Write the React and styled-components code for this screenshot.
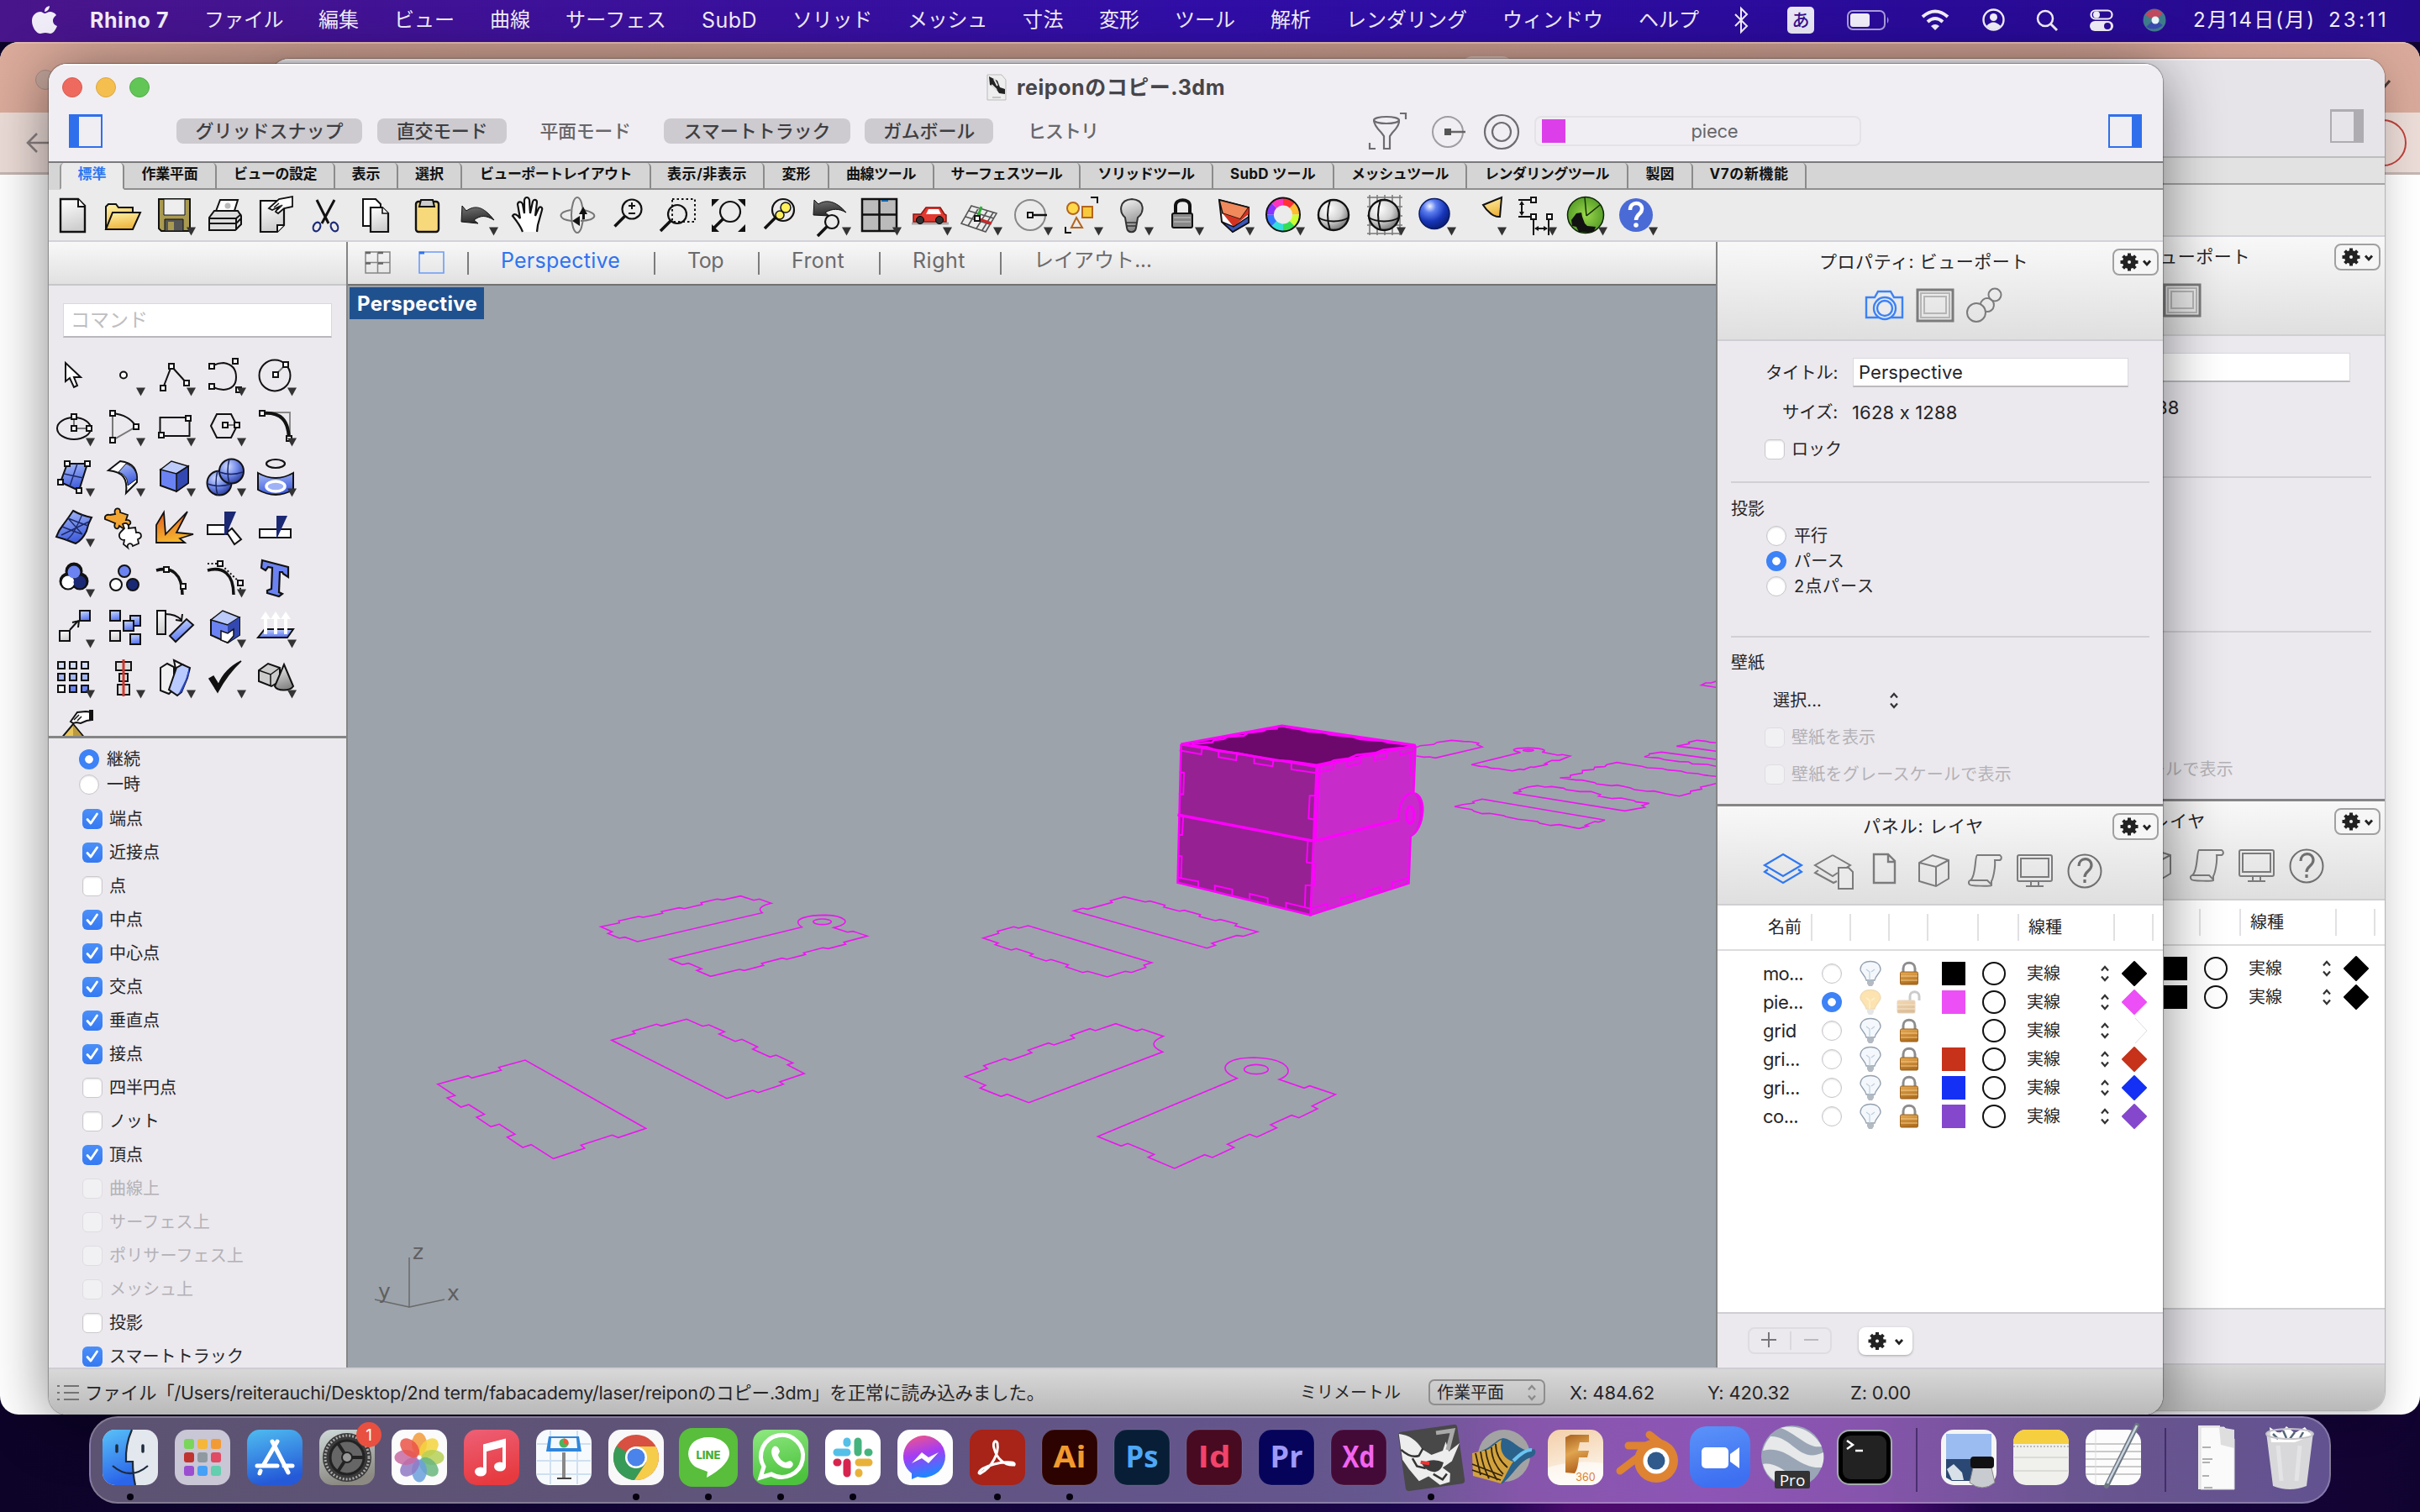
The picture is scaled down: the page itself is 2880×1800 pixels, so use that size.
import React, { useLayoutEffect, useRef, useState } from "react";
import styled, { createGlobalStyle, css } from "styled-components";

const Global = createGlobalStyle`
  * { box-sizing: border-box; }
  html, body { margin: 0; padding: 0; }
  body {
    width: 2880px; height: 1800px; overflow: hidden;
    font-family: Inter, "Noto Sans CJK JP", sans-serif;
    color: #262528; font-size: 20px;
    -webkit-font-smoothing: antialiased;
  }
`;

/* ---------- text ---------- */

const TextBox = styled.span`
  display: block;
  flex: none;
  white-space: nowrap;
  line-height: ${(p) => p.$lh || 30}px;
  font-size: ${(p) => p.$size || 20}px;
  font-weight: ${(p) => p.$weight || 400};
  color: ${(p) => p.$color || "inherit"};
`;
const TextRun = styled.span`
  display: inline-block;
`;

function Text({ w, size, weight, color, lh, children }) {
  const ref = useRef(null);
  const [spacing, setSpacing] = useState(0);
  useLayoutEffect(() => {
    if (w && ref.current) {
      const natural = ref.current.getBoundingClientRect().width;
      setSpacing((w - natural) / children.length);
    }
  }, []);
  return (
    <TextBox $size={size} $weight={weight} $color={color} $lh={lh} style={w ? { width: w } : undefined}>
      <TextRun ref={ref} style={{ letterSpacing: spacing }}>{children}</TextRun>
    </TextBox>
  );
}

/* ---------- desktop ---------- */

const Desktop = styled.main`
  position: relative;
  width: 2880px;
  height: 1800px;
  overflow: hidden;
  background: linear-gradient(90deg, #0d0328 0%, #160540 50%, #1d0650 62%, #4c0b6c 65%, #480a70 78%, #1a0445 82%, #110330 100%);
`;

const MenuBar = styled.header`
  height: 50px;
  display: flex;
  align-items: center;
  padding: 0 37px 3px 37px;
  background: linear-gradient(90deg, #49158a 0%, #3c119a 25%, #300ea6 50%, #290b98 80%, #260a8c 100%);
  color: #f1edf8;
`;
const MenuItems = styled.nav`
  display: flex;
  gap: 42px;
  margin-left: 38px;
`;
const StatusItems = styled.div`
  display: flex;
  align-items: center;
  margin-left: auto;
`;
const StatusSlot = styled.div`
  width: ${(p) => p.$w}px;
  display: flex;
  justify-content: center;
  flex: none;
`;
const InputBadge = styled.div`
  width: 32px;
  height: 32px;
  border-radius: 5px;
  background: #e9e6f6;
  display: flex;
  align-items: center;
  justify-content: center;
`;

const Window = styled.section`
  position: absolute;
  left: ${(p) => p.$x}px;
  top: ${(p) => p.$y}px;
  width: ${(p) => p.$w}px;
  height: ${(p) => p.$h}px;
  border-radius: 22px;
  overflow: hidden;
  display: flex;
  flex-direction: column;
  background: ${(p) => p.$bg || "#ebe9ee"};
  box-shadow: ${(p) => p.$shadow || "none"};
`;

/* ---------- browser window ---------- */

const BrowserTabs = styled.div`
  height: 84px;
  flex: none;
  display: flex;
  align-items: flex-start;
  justify-content: space-between;
  padding: 31px 35px 0 42px;
  border-top: 2px solid #e3bcae;
  background: linear-gradient(90deg, #dbab9b 0%, #c99d8f 10%, #c69a8b 50%, #c99c8f 85%, #d9aa9b 100%);
`;
const BrowserTab = styled.div`
  width: 60px;
  height: 40px;
  margin: -16px auto 0 1674px;
  border-radius: 12px;
  background: #d9bdb4;
`;
const BrowserBar = styled.div`
  height: 74px;
  flex: none;
  display: flex;
  align-items: center;
  justify-content: space-between;
  padding: 0 14px 0 30px;
  background: #ecdcd7;
  border-bottom: 3px solid #c5b6b2;
`;

/* ---------- rhino window chrome ---------- */

const TitleArea = styled.div`
  height: 116px;
  flex: none;
  background: ${(p) => (p.$dim ? "#e6e4e9" : "#f0eef3")};
  border-top: 2px solid ${(p) => (p.$dim ? "#f4f2f5" : "#fbfafc")};
`;
const TitleRow = styled.div`
  height: 52px;
  display: grid;
  grid-template-columns: 1fr auto 1fr;
  align-items: center;
  padding: 0 16px 0 16px;
`;
const Lights = styled.div`
  display: flex;
  gap: 16px;
`;
const Light = styled.i`
  width: 24px;
  height: 24px;
  border-radius: 50%;
  background: ${(p) => p.$c};
  border: 1px solid ${(p) => p.$b};
`;
const TitleText = styled.div`
  display: flex;
  align-items: center;
  gap: 12px;
`;
const ModeRow = styled.div`
  height: 52px;
  display: flex;
  align-items: center;
  padding: 0 25px 0 24px;
`;
const Modes = styled.div`
  display: flex;
  align-items: center;
  margin-left: 88px;
`;
const Mode = styled.div`
  width: ${(p) => p.$w}px;
  height: 30px;
  margin-right: ${(p) => p.$gap || 0}px;
  border-radius: 8px;
  display: flex;
  align-items: center;
  justify-content: center;
  padding-bottom: 1px;
  background: ${(p) => (p.$on ? "#cdcbd0" : "transparent")};
  color: ${(p) => (p.$on ? "#3f3e42" : "#68676b")};
`;
const RightTools = styled.div`
  margin-left: auto;
  display: flex;
  align-items: center;
`;
const LayerField = styled.div`
  width: 389px;
  height: 36px;
  margin: 0 294px 0 17px;
  padding-left: 2px;
  border: 2px solid #e4e2e7;
  border-radius: 8px;
  display: grid;
  grid-template-columns: 38px 1fr;
  align-items: center;
  justify-items: center;
`;
const Swatch = styled.i`
  display: block;
  width: 28px;
  height: 28px;
  background: ${(p) => p.$c};
`;
const PanelToggle = styled.i`
  display: block;
  width: 40px;
  height: 40px;
  border: 2px solid ${(p) => p.$c};
  border-${(p) => p.$side}-width: 12px;
  border-top-width: 3px;
`;

const TabStrip = styled.div`
  height: 34px;
  flex: none;
  display: flex;
  align-items: stretch;
  padding-left: 13px;
  background: ${(p) => (p.$dim ? "#e2e2e2" : "#d5d5d5")};
  border-top: 2px solid ${(p) => (p.$dim ? "#bdbcc0" : "#7b7b7d")};
  border-bottom: ${(p) => (p.$dim ? 2 : 0)}px solid #a3a3a3;
`;
const ToolTab = styled.div`
  width: ${(p) => p.$w}px;
  display: flex;
  justify-content: center;
  align-items: center;
  padding-bottom: 4px;
  border-right: 2px solid #8b8b8b;
  border-top-right-radius: 5px;
  border-bottom: 2px solid #8f8f8f;
  color: #111;
  ${(p) =>
    p.$active &&
    css`
      background: #ebebeb;
      border-bottom-color: #ebebeb;
      border-left: 2px solid #999;
      border-top-left-radius: 5px;
      color: #2f78f0;
    `}
`;
const TabFill = styled.div`
  flex: 1;
  border-bottom: 2px solid #8f8f8f;
`;
const ToolBar = styled.div`
  height: 62px;
  flex: none;
  display: flex;
  background: ${(p) => (p.$dim ? "#e9e9e9" : "#ebebeb")};
  border-bottom: 2px solid #d3d2d9;
`;
const ToolRun = styled.div`
  display: flex;
  margin-left: -1px;
`;
const Glyph = styled.svg`
  display: block;
  flex: none;
  width: ${(p) => p.$w || 60}px;
  height: ${(p) => p.$h || p.$w || 60}px;
  overflow: visible;
`;

const Body = styled.div`
  flex: 1;
  min-height: 0;
  display: flex;
`;
const LeftPanel = styled.aside`
  width: 356px;
  flex: none;
  display: flex;
  flex-direction: column;
  overflow: hidden;
  border-right: 2px solid #858585;
  background: #ebe9ee;
`;
const LeftHead = styled.div`
  height: 52px;
  flex: none;
  background: linear-gradient(#f8f8f8, #e1e1e1);
  border-bottom: 2px solid #c7c6c9;
`;
const CommandInput = styled.div`
  margin: 21px 17px 15px 17px;
  height: 41px;
  flex: none;
  display: flex;
  align-items: center;
  padding-left: 8px;
  background: #fff;
  border: 1px solid #dad8dd;
  border-bottom: 2px solid #b9b7bc;
`;
const ToolGrid = styled.div`
  height: 459px;
  flex: none;
  display: grid;
  grid-template-columns: repeat(5, 60px);
  grid-auto-rows: 60px;
  align-content: start;
  margin-left: -1px;
  overflow: hidden;
`;
const SnapList = styled.div`
  flex: 1;
  min-height: 0;
  overflow: hidden;
  border-top: 3px solid #858585;
  padding: 10px 0 0 36px;
`;
const SnapRadio = styled.div`
  height: 30px;
  display: flex;
  align-items: center;
  gap: 9px;
`;
const SnapRow = styled.div`
  height: 40px;
  display: flex;
  align-items: center;
  gap: 8px;
  padding-left: 4px;
  color: ${(p) => (p.$off ? "#b3b1b6" : "inherit")};
`;
const SnapGap = styled.div`
  height: 6px;
`;
const Radio = styled.i`
  flex: none;
  width: 24px;
  height: 24px;
  border-radius: 50%;
  background: ${(p) => (p.$on ? "radial-gradient(circle, #fff 0 4.4px, #3d82f6 5.2px)" : "#fff")};
  border: ${(p) => (p.$on ? 0 : 1)}px solid #c6c4c9;
  box-shadow: ${(p) => (p.$on ? "none" : "inset 0 1px 2px rgba(0,0,0,.14)")};
`;
const Box = styled.i`
  flex: none;
  width: 24px;
  height: 24px;
  border-radius: 6px;
  background: ${(p) => (p.$on ? "linear-gradient(#4a8ff8, #3579f2)" : p.$off ? "#f1f0f3" : "#fff")};
  border: ${(p) => (p.$on ? 0 : 1)}px solid ${(p) => (p.$off ? "#dfdde2" : "#cbc9ce")};
  box-shadow: ${(p) => (p.$on || p.$off ? "none" : "inset 0 1px 2px rgba(0,0,0,.12)")};
`;

const Viewport = styled.section`
  width: 1628px;
  flex: none;
  display: flex;
  flex-direction: column;
`;
const ViewTabs = styled.div`
  height: 52px;
  flex: none;
  display: flex;
  align-items: center;
  padding: 0 0 6px 20px;
  background: linear-gradient(#f8f8f8, #e1e1e1);
  border-bottom: 2px solid #727272;
`;
const ViewTab = styled.div`
  width: ${(p) => p.$w}px;
  height: 27px;
  margin-top: 6px;
  border-left: 2px solid #7c7c7c;
  display: flex;
  align-items: center;
  padding: 0 0 6px ${(p) => p.$pad}px;
  color: ${(p) => (p.$active ? "#2f73f0" : "#6b6a6d")};
`;
const ViewIcons = styled.div`
  width: 122px;
  display: flex;
  gap: 33px;
  margin-top: 4px;
`;
const Scene = styled.div`
  flex: 1;
  position: relative;
  background: #9ca3ab;
`;
const SceneSvg = styled.svg`
  display: block;
  width: 1628px;
  height: 1288px;
`;
const ViewLabel = styled.div`
  position: absolute;
  left: 2px;
  top: 2px;
  width: 160px;
  height: 38px;
  padding: 1px 0 0 9px;
  display: flex;
  align-items: center;
  background: #20518f;
  color: #fff;
`;

/* ---------- right panel ---------- */

const RightPanel = styled.aside`
  width: 532px;
  flex: none;
  margin-left: auto;
  border-left: 2px solid #858585;
  display: flex;
  flex-direction: column;
  background: #ebe9ee;
`;
const PanelHead = styled.div`
  height: ${(p) => p.$h}px;
  flex: none;
  display: grid;
  grid-template-columns: 1fr 60px;
  grid-template-rows: 47px 1fr;
  background: linear-gradient(#f8f8f8, #dfdfdf);
  border-bottom: 2px solid #cfced3;
`;
const PanelTitle = styled.div`
  grid-column: 1 / 3;
  grid-row: 1;
  display: flex;
  padding: ${(p) => p.$top}px 0 0 ${(p) => p.$left}px;
`;
const PanelGear = styled.div`
  grid-column: 2;
  grid-row: 1;
  margin: 8px 5px 0 0;
  width: 55px;
  height: 32px;
  border: 2px solid #a0a0a1;
  border-radius: 8px;
  background: #f6f6f6;
`;
const PanelIcons = styled.div`
  grid-column: 1 / 3;
  grid-row: 2;
  display: flex;
  align-items: flex-start;
  gap: ${(p) => p.$gap}px;
  padding: ${(p) => p.$top}px 0 0 ${(p) => p.$left}px;
`;
const Props = styled.div`
  height: 554px;
  flex: none;
  display: flex;
  flex-direction: column;
  border-bottom: 3px solid #858585;
  padding: 0 16px;
`;
const FieldRow = styled.div`
  display: flex;
  align-items: center;
  flex: none;
  height: ${(p) => p.$h}px;
  margin-top: ${(p) => p.$mt || 0}px;
  padding-left: ${(p) => p.$pl || 0}px;
  gap: ${(p) => p.$gap || 0}px;
  color: ${(p) => (p.$off ? "#b3b1b6" : "inherit")};
`;
const FieldInput = styled.div`
  width: 328px;
  height: 35px;
  background: #fff;
  border: 1px solid #dad8dd;
  border-bottom: 2px solid #bcbabf;
  padding-left: 6px;
  display: flex;
  align-items: center;
`;
const Rule = styled.div`
  height: 2px;
  flex: none;
  background: #d1cfd4;
  margin-top: ${(p) => p.$mt}px;
`;

const Table = styled.div`
  flex: 1;
  background: #fff;
  display: flex;
  flex-direction: column;
`;
const cols = css`
  display: grid;
  grid-template-columns: 113px 46px 46px 46px 60px 48px 114px 46px 1fr;
  align-items: center;
`;
const HeadRow = styled.div`
  ${cols};
  height: 54px;
  flex: none;
  border-bottom: 2px solid #dcdbde;
  margin-bottom: 10px;
`;
const HeadCell = styled.div`
  height: 32px;
  display: flex;
  align-items: center;
  padding-left: ${(p) => p.$pl || 0}px;
  border-right: ${(p) => (p.$end ? 0 : 2)}px solid #e1e0e3;
`;
const LayerRow = styled.div`
  ${cols};
  height: 34px;
`;
const Cell = styled.div`
  display: flex;
  align-items: center;
  justify-content: ${(p) => p.$j || "center"};
  padding-left: ${(p) => p.$pl || 0}px;
  gap: ${(p) => p.$gap || 0}px;
`;
const Ring = styled.i`
  width: 28px;
  height: 28px;
  border: 2px solid #111;
  border-radius: 50%;
`;
const PanelFoot = styled.div`
  height: 66px;
  flex: none;
  border-top: 2px solid #cfced2;
  display: flex;
  align-items: center;
  gap: 32px;
  padding: 0 0 0 36px;
`;
const Segmented = styled.div`
  width: 100px;
  height: 32px;
  border: 2px solid #dedce1;
  border-radius: 8px;
`;
const GearMenu = styled.div`
  width: 64px;
  height: 33px;
  background: #fff;
  border-radius: 8px;
  box-shadow: 0 1px 3px rgba(0, 0, 0, 0.3);
`;

const StatusBar = styled.footer`
  height: 56px;
  flex: none;
  display: flex;
  align-items: center;
  padding: 1px 0 0 10px;
  background: linear-gradient(#d8d8d8, #b9b9b9);
  border-top: 2px solid #cfcdd3;
`;
const StatusCell = styled.div`
  width: ${(p) => p.$w}px;
  flex: none;
`;
const Popup = styled.div`
  width: 139px;
  height: 31px;
  margin-right: 29px;
  border: 2px solid #8e8e8e;
  border-radius: 7px;
  display: flex;
  align-items: center;
  justify-content: space-between;
  padding: 0 8px;
`;

/* ---------- dock ---------- */

const Dock = styled.footer`
  position: absolute;
  left: 106px;
  top: 1686px;
  width: 2668px;
  height: 104px;
  border-radius: 34px;
  border: 2px solid rgba(255, 255, 255, 0.24);
  background: linear-gradient(90deg, #5c5271 0%, #5f5478 25%, #63558a 48%, #65578f 58%, #8656ab 64%, #8d55b6 72%, #8754ad 79%, #69558f 89%, #625290 100%);
  display: flex;
  padding: 9px 0 0 4px;
`;
const DockSlot = styled.div`
  width: 86px;
  flex: none;
  display: flex;
  flex-direction: column;
  align-items: center;
`;
const DockDot = styled.i`
  flex: none;
  width: 8px;
  height: 8px;
  margin-top: 5px;
  border-radius: 50%;
  background: #06020f;
`;
const DockSep = styled.div`
  width: 38px;
  flex: none;
  display: flex;
  justify-content: center;
  &::before {
    content: "";
    width: 2px;
    height: 76px;
    margin-top: 3px;
    background: rgba(50, 30, 90, 0.7);
  }
`;

/* ---------- shared gradients ---------- */

const Stops = ({ s }) => s.map(([o, c]) => <stop key={o} offset={o} stopColor={c} />);
const grads = {
  gBlue: [[0, "#cfdcff"], [1, "#5b78f0"]],
  gBlueD: [[0, "#a9bcf8"], [1, "#3e5cdc"]],
  gPage: [[0, "#ffffff"], [1, "#cfcfcf"]],
  gYel: [[0, "#fff2a8"], [1, "#eeb640"]],
  gDark: [[0, "#777777"], [1, "#2b2b2b"]],
  gGray: [[0, "#f5f5f5"], [1, "#888888"]],
  gFire: [[0, "#e05a20"], [1, "#f5b52f"]],
  gFinder: [[0, "#59c2f8"], [1, "#2b66ea"]],
  gStore: [[0, "#4fbcf0"], [1, "#2459d8"]],
  gMusic: [[0, "#ee6076"], [1, "#e63a3f"]],
  gWa: [[0, "#8fe981"], [1, "#4cc23d"]],
  gMes: [[0, "#f5577f"], [0.5, "#a43cf5"], [1, "#1f86ff"]],
  gZoom: [[0, "#5b93f9"], [1, "#3d6ff1"]],
  gFus: [[0, "#f3cfa9"], [1, "#fdf6ec"]],
  gFusF: [[0, "#a85f1e"], [0.5, "#e0a550"], [1, "#b4651f"]],
  gLock: [[0, "#e8ab55"], [1, "#b06f1e"]],
  gSet: [[0, "#cfdad9"], [1, "#8c8a83"]],
};
const Defs = () => (
  <Glyph $w={0.01} viewBox="0 0 1 1">
    <defs>
      {Object.entries(grads).map(([id, s]) => (
        <linearGradient key={id} id={id} x1="0" y1="0" x2="0.25" y2="1"><Stops s={s} /></linearGradient>
      ))}
      <radialGradient id="rBlue" cx=".35" cy=".3" r=".8"><Stops s={[[0, "#d0dcff"], [0.5, "#7088e8"], [1, "#1d2f90"]]} /></radialGradient>
      <radialGradient id="rNavy" cx=".35" cy=".25" r=".85"><Stops s={[[0, "#f0f5ff"], [0.25, "#5c7df0"], [0.6, "#1635b8"], [1, "#081660"]]} /></radialGradient>
      <radialGradient id="rGray" cx=".35" cy=".3" r=".85"><Stops s={[[0, "#ffffff"], [0.5, "#d2d2d2"], [1, "#555555"]]} /></radialGradient>
      <radialGradient id="rGreen" cx=".5" cy=".5" r=".6"><Stops s={[[0, "#9ad84a"], [1, "#4c9423"]]} /></radialGradient>
    </defs>
  </Glyph>
);

/* ---------- tool glyphs, 60 x 60 cells ---------- */

const K = "#111";
const Sq = ({ x, y }) => <rect x={x - 3} y={y - 3} width="6" height="6" fill="#fff" stroke="#111" strokeWidth="2" />;
const Line = (p) => <path fill="none" stroke={K} strokeWidth="2" {...p} />;
const Arrow = () => <path d="M45 44.500h11l-5.500 10z" fill="#333" />;
const Lens = ({ x = 34, y = 24, r = 11, f = "none" }) => (
  <g>
    <circle cx={x} cy={y} r={r} fill={f} stroke={K} strokeWidth="2.200" />
    <path d={`M${x - r * 0.7} ${y + r * 0.7}L${x - r - 9} ${y + r + 9}`} stroke={K} strokeWidth="3.500" />
  </g>
);

const top = [
  [<g><path d="M15 11h21l8 8v31H15z" fill="url(#gPage)" stroke={K} strokeWidth="2.400" /><path d="M36 11v9h8" fill="#fff" stroke={K} strokeWidth="2" /></g>],
  [<g><path d="M9 47V20l3-3h9l3 4h17v8" fill="url(#gYel)" stroke={K} strokeWidth="2" /><path d="M9 47l8-20h33l-9 20z" fill="url(#gYel)" stroke={K} strokeWidth="2" /></g>],
  [<g><path d="M12 11h37v38H15l-3-3z" fill="#a99a50" stroke={K} strokeWidth="2" /><path d="M18 11h25v19H18z" fill="#eee" stroke={K} /><path d="M19 35h22v14H19z" fill="#555" stroke={K} /><path d="M23 38h7v10h-7z" fill="#a99a50" /></g>, 1],
  [<g><path d="M19 28l6-16h21l-5 16z" fill="#fff" stroke={K} strokeWidth="2" /><path d="M12 33l6-8h28l4 6v10l-7 7H12z" fill="#ddd" stroke={K} strokeWidth="2" /><path d="M12 34h32l6-5M12 40h32l6-6M44 34v14" fill="none" stroke={K} strokeWidth="2" /><circle cx="34" cy="19" r="3.500" fill="#bbb" /></g>],
  [<g><path d="M13 13h28v29l-8 8H13z" fill="url(#gPage)" stroke={K} strokeWidth="2.200" /><path d="M33 50v-8h8" fill="#fff" stroke={K} strokeWidth="2" /><path d="M23 22l12-11 16-3v12l-10 2-7 6-3-2 4-6-8 4z" fill="#fff" stroke={K} strokeWidth="1.800" /><path d="M29 21l6-5M33 24l6-6" stroke={K} strokeWidth="1.500" /></g>],
  [<g><path d="M20 12l14 28M41 12L26 40" stroke={K} strokeWidth="3" /><ellipse cx="20" cy="44" rx="4" ry="5.500" fill="none" stroke="#1c2a78" strokeWidth="2.200" transform="rotate(25 20 44)" /><ellipse cx="41" cy="44" rx="4" ry="5.500" fill="none" stroke="#1c2a78" strokeWidth="2.200" transform="rotate(-25 41 44)" /></g>],
  [<g><path d="M15 11h15l6 6v26H15z" fill="#fff" stroke={K} strokeWidth="2" /><path d="M24 21h14l7 7v22H24z" fill="url(#gPage)" stroke={K} strokeWidth="2.200" /><path d="M38 21v7h7" fill="#fff" stroke={K} strokeWidth="1.600" /></g>],
  [<g><rect x="18" y="14" width="27" height="36" rx="3" fill="#f7d97c" stroke={K} strokeWidth="2.400" /><path d="M24 12h14l2 8H22z" fill="#ccc" stroke={K} strokeWidth="2" /></g>],
  [<path d="M12 38l1-19 5 6c10-7 20-6 33 11-10-6-16-6-24 0l5 4z" fill="url(#gDark)" stroke={K} strokeWidth="1" />, 1],
  [<path d="M25 50c-3-8-8-14-12-19 2-4 6-1 9 3L19 17c1-4 5-3 6 0l2 11V12c1-4 5-4 6 0l1 16 3-14c1-3 5-3 5 1l-2 16 4-9c2-3 5-1 4 2l-5 18-1 8" fill="#fff" stroke={K} strokeWidth="2.200" />],
  [<g><ellipse cx="30" cy="30" rx="7" ry="21" fill="none" stroke="#777" strokeWidth="2" /><path d="M38 24c18 4 16 12-4 13M23 37c-16-2-17-10-1-13" fill="none" stroke="#777" strokeWidth="2" /><path d="M24 37l9-6v12z" fill={K} /><path d="M37 20l5 9H32zM36 28h3v7h-3z" fill={K} /></g>],
  [<g><Lens x={35} y={23} r={11.5} /><path d="M35 15v8M31 19h8M31 28h8" stroke={K} strokeWidth="2" /></g>],
  [<g><path d="M23 11h27v27H23z" fill="none" stroke={K} strokeWidth="2" strokeDasharray="2.500 3" /><Lens x={29} y={29} r={11} /></g>],
  [<g><Lens x={32} y={26} r={12} /><path d="M10 11h9l-9 9zM50 11v9l-9-9zM50 50h-9l9-9zM10 50v-9l9 9z" fill={K} /></g>],
  [<g><Lens x={35} y={24} r={13} /><circle cx="38" cy="21" r="6" fill="#ffef5a" stroke={K} strokeWidth="1.500" /><circle cx="31" cy="30" r="5" fill="#ffef5a" stroke={K} strokeWidth="1.500" /></g>],
  [<g><path d="M11 30l1-18 5 5c9-6 21-4 33 10-9-5-16-5-25 0l5 4z" fill="url(#gDark)" stroke={K} /><Lens x={33} y={38} r={8} /></g>, 1],
  [<g><rect x="9" y="11" width="41" height="38" fill="#bbb" stroke={K} strokeWidth="2.500" /><path d="M29.500 11v38M9 29.500h41" stroke={K} strokeWidth="2.500" /><path d="M32 13h8" stroke="#16a" strokeWidth="2" /></g>, 1],
  [<g><path d="M8 40h44" stroke="#aaa" strokeWidth="3" /><path d="M10 29h9l6-8h17l5 8 2 1v8H10z" fill="#e23a30" stroke="#8a1712" strokeWidth="1.500" /><path d="M28 23h12l3 6H25z" fill="#fff" /><circle cx="18" cy="36" r="4.500" fill="#333" stroke="#000" /><circle cx="41" cy="36" r="4.500" fill="#333" stroke="#000" /></g>, 1],
  [<g><path d="M19 19l30 9-13 22-29-10zM16 25l30 9M12 32l29 9M28 21L15 43M38 25L25 46M45 27L32 48" fill="none" stroke="#555" strokeWidth="1.600" /><path d="M26 34l5-14" stroke="#2eae34" strokeWidth="3" /><path d="M26 34l17 6" stroke="#d02626" strokeWidth="3" /><Sq x={26} y={34} /></g>, 1],
  [<g><circle cx="29" cy="30" r="18" fill="none" stroke="#888" strokeWidth="2" /><path d="M29 30h20" stroke={K} strokeWidth="2.500" /><Sq x={29} y={30} /></g>, 1],
  [<g transform="translate(3 0)"><circle cx="17" cy="22" r="7" fill="#ffd94a" stroke="#b5651d" strokeWidth="2" /><rect x="28" y="20" width="12" height="13" fill="#f7c93c" stroke="#b5651d" strokeWidth="2" /><path d="M21 33l7 12H15z" fill="none" stroke="#b5651d" strokeWidth="2" /><path d="M38 9h8v7M8 44v7h7" fill="none" stroke={K} strokeWidth="2" /></g>, 1],
  [<g><path d="M30 11c-16 1-15 16-8 22l2 12c1 7 10 7 11 0l2-12c8-6 9-21-7-22z" fill="url(#gGray)" stroke="#333" strokeWidth="2" /><path d="M24 39h11M24 43h11" stroke="#333" strokeWidth="1.500" /></g>, 1],
  [<g><path d="M22 29V19c0-9 17-9 17 0v10" fill="none" stroke={K} strokeWidth="4" /><rect x="18" y="28" width="24" height="17" rx="2" fill="#888" stroke={K} strokeWidth="2" /><path d="M20 33h20M20 38h20" stroke="#ccc" /></g>, 1],
  [<g><path d="M14 12l35 9v18L30 50 17 38z" fill="#fff" stroke={K} strokeWidth="2" /><path d="M14 12l35 9-10 14-21-7z" fill="#f0895c" stroke={K} strokeWidth="1.500" /><path d="M18 28l21 7 10-14v8L31 44z" fill="#d53321" /><path d="M31 44l18-12v7L30 50 17 38z" fill="#3b55b8" stroke={K} strokeWidth="1.500" /></g>, 1],
  [<g fill="none" strokeWidth="9">{["#f33", "#fb3", "#cf3", "#3d5", "#3dd", "#37f", "#83f", "#f3b"].map((c, i) => <path key={c} d="M30 14a15.500 15.500 0 0 1 11 4.500" stroke={c} transform={`rotate(${i * 45} 30 29.500)`} />)}<circle cx="30" cy="29.500" r="20" stroke={K} strokeWidth="2" /></g>, 1],
  [<g><circle cx="30" cy="30" r="18" fill="url(#rGray)" stroke={K} strokeWidth="2.400" /><path d="M26 12c-4 12-4 24 0 36M12 33c10 6 26 6 36 0" fill="none" stroke={K} strokeWidth="2" /></g>],
  [<g><path d="M10 9h42M10 20h42M10 31h42M10 42h42M10 52h42M13 6v48M22 6v48M31 6v48M40 6v48M49 6v48" stroke="#777" strokeWidth="1.500" /><circle cx="30" cy="30" r="18" fill="url(#rGray)" stroke={K} strokeWidth="2.400" /><path d="M26 12c-4 12-4 24 0 36M12 33c10 6 26 6 36 0" fill="none" stroke={K} strokeWidth="2" /></g>, 1],
  [<circle cx="30" cy="28.500" r="18" fill="url(#rNavy)" stroke="#091a60" strokeWidth="1.500" />, 1],
  [<path d="M28 18L50 9l-2 23c-7 1-15-6-20-14z" fill="url(#gYel)" stroke={K} strokeWidth="2" />, 1],
  [<g><path d="M10 12h16M10 32h16M14 15v14M28 34v20M46 34v20M30 46h14" fill="none" stroke={K} strokeWidth="2" /><path d="M14 13l3 5h-6zM14 31l3-5h-6zM29 46l5-3v6zM45 46l-5-3v6z" fill={K} /><Sq x={28} y={12} /><Sq x={28} y={32} /><Sq x={47} y={32} /></g>, 1],
  [<g><circle cx="30" cy="30" r="21.500" fill="url(#rGreen)" stroke="#0c2506" strokeWidth="1.500" /><path d="M29 9l2 22M31 31l16-13" stroke="#16300b" strokeWidth="1.500" /><path d="M13 36l6-8 6-1 1 5 3 8 3 3 10 1-2 5-6 2-12-1-3-6-5-1z" fill={K} /></g>, 1],
  [<g><circle cx="30" cy="30" r="20" fill="#4a6ad6" /><path d="M23 24c0-11 15-10 14-1 0 6-7 6-7 13" fill="none" stroke="#fff" strokeWidth="4.500" /><circle cx="30" cy="42" r="2.800" fill="#fff" /></g>, 1],
];

const side = [
  [<path d="M21 15v22l5-4 5 11 4-2-4-10h8z" fill="#fff" stroke={K} strokeWidth="2" />],
  [<circle cx="30" cy="29.500" r="4" fill="#fff" stroke={K} strokeWidth="2" />, 1],
  [<g><Line d="M17 45L27 19l18 20" /><Sq x={17} y={45} /><Sq x={27} y={19} /><Sq x={45} y={39} /></g>, 1],
  [<g><Line d="M15 19Q22 15 29 15 44 17 44 32 44 46 29 47 20 46 15 43" /><Sq x={15} y={19} /><Sq x={43} y={13} /><Sq x={15} y={43} /><Sq x={47} y={47} /></g>, 1],
  [<g><circle cx="30" cy="30" r="18.500" fill="none" stroke={K} strokeWidth="2" /><Line d="M31 29l12-12" stroke="#777" /><Sq x={31} y={29} /><Sq x={43} y={17} /></g>, 1],
  [<g><ellipse cx="31" cy="33" rx="20" ry="13" fill="none" stroke={K} strokeWidth="2" /><Line d="M31 19v14h18" stroke="#777" /><Sq x={31} y={19} /><Sq x={31} y={33} /><Sq x={49} y={33} /></g>, 1],
  [<g><Line d="M17 15v32l28-16" stroke="#777" /><Line d="M17 15q20 2 28 16" /><Sq x={17} y={15} /><Sq x={17} y={47} /><Sq x={45} y={31} /></g>, 1],
  [<g><rect x="13.500" y="20" width="35" height="22" fill="none" stroke={K} strokeWidth="2" /><Sq x={47} y={21} /><Sq x={15} y={41} /></g>, 1],
  [<g><Line d="M14 30l7-14h17l7 14-7 14H21z" /><Line d="M31 29h14" stroke="#777" /><Sq x={31} y={29} /><Sq x={45} y={29} /></g>, 1],
  [<g><Line d="M15 14h33v31" stroke="#888" /><Line d="M15 15c22-2 31 8 32 30" strokeWidth="4" /><Sq x={15} y={15} /><Sq x={47} y={45} /></g>, 1],
  [<g><path d="M23 15h24L37 47 15 37z" fill="url(#gBlueD)" stroke={K} strokeWidth="2" /><path d="M35 15l-9 27M19 27l23 5" stroke="#1c2a68" strokeWidth="1.500" /><Sq x={23} y={15} /><Sq x={47} y={15} /><Sq x={15} y={37} /><Sq x={37} y={47} /></g>, 1],
  [<g><path d="M12 23l14-11c16 2 21 10 20 25L33 50c2-17-3-25-21-27z" fill="#fff" stroke={K} strokeWidth="2" /><path d="M24 25l9-10c8 3 13 9 13 18l-11 8c0-8-3-13-11-16z" fill="url(#gBlueD)" stroke={K} strokeWidth="1" /></g>, 1],
  [<g><path d="M14 22v19l19 7 14-10V18z" fill="#6b83f2" stroke={K} strokeWidth="2" /><path d="M14 22l13-10 20 6-14 9z" fill="#bccbfa" stroke={K} strokeWidth="1.500" /><path d="M33 27v21l14-10V18z" fill="#3348b0" stroke={K} strokeWidth="1.500" /></g>, 1],
  [<g><circle cx="24" cy="38" r="14.500" fill="url(#rBlue)" stroke={K} strokeWidth="2" /><path d="M22 23q-4 15 0 30M10 39q14 5 28 0" fill="none" stroke="#1a2763" strokeWidth="1.500" /><circle cx="38.500" cy="24" r="14.500" fill="url(#rBlue)" stroke={K} strokeWidth="2" /><path d="M36 9q-4 15 0 30M24 25q14 5 28 0" fill="none" stroke="#1a2763" strokeWidth="1.500" /></g>, 1],
  [<g><ellipse cx="31" cy="15" rx="11" ry="5" fill="none" stroke={K} strokeWidth="2.200" /><path d="M10 26q21 12 42 0v20q-21 12-42 0z" fill="url(#gBlueD)" stroke={K} strokeWidth="2" /><ellipse cx="31" cy="42" rx="11" ry="6" fill="#9fb2f7" stroke="#fff" strokeWidth="3.500" /></g>, 1],
  [<g><path d="M30 11q11 6 22 8-4 7-6 16-5 11-13 15-12-5-23-8 3-8 8-14 6-8 12-17z" fill="url(#gBlueD)" stroke={K} strokeWidth="2" /><path d="M41 15q-4 10-8 17-4 9-11 14M24 20q12 5 24 9M17 30q12 5 24 9M24 20l17 19M49 24L16 40" fill="none" stroke="#1c2a68" strokeWidth="1.400" /></g>, 1],
  [<g><path d="M12 18l6-1c-3-8 7-9 6-2l9 3-2 6c7-1 7 7 1 6l-3 5-6-4c-1 6-8 3-5-3l-7-3-5-2c-1-4 2-6 6-5z" transform="translate(2 -2)" fill="#f3a532" stroke={K} strokeWidth="1.800" /><path d="M27 36l4-4-2-5c5-3 8 1 7 5l8-1 1 6c7-1 8 6 2 8l1 5-7 3c-1-5-8-3-6 2l-5-4 1-5c-6 0-8-6-4-10z" fill="#fff" stroke={K} strokeWidth="1.800" /></g>],
  [<path d="M9 49V28L18 13l2 26L46 12 33 37l20 2-16 5 6 5z" fill="url(#gFire)" stroke={K} strokeWidth="1.800" />],
  [<g><rect x="10" y="28" width="24" height="11" fill="#fff" stroke={K} strokeWidth="2" /><path d="M33 37l6-5 11 13-8 6z" fill="#fff" stroke={K} strokeWidth="2" /><path d="M30 12h14L32 40h-2z" fill="#1b2874" /></g>],
  [<g><rect x="12" y="33" width="37" height="10" fill="#fff" stroke={K} strokeWidth="2" /><path d="M32 17h13L33 43h-1z" fill="#1b2874" /></g>],
  [<g stroke={K} strokeWidth="5"><circle cx="31" cy="23" r="8" /><circle cx="24" cy="35" r="8" /><circle cx="38" cy="35" r="8" /><g stroke="none"><circle cx="24" cy="36" r="7.500" fill="#fff" /><circle cx="38" cy="36" r="7.500" fill="#1b2874" /><circle cx="31" cy="24" r="7.500" fill="#6b83f2" /></g></g>, 1],
  [<g stroke={K} strokeWidth="2"><circle cx="31" cy="23" r="7" fill="#6b83f2" /><circle cx="21" cy="39" r="7" fill="#fff" /><circle cx="41" cy="39" r="7" fill="#1b2874" /></g>],
  [<g><Line d="M9 22c18-5 31 4 31 29" strokeWidth="3.500" /><Sq x={21} y={21} /><Sq x={41} y={41} /></g>],
  [<g><Line d="M10 22c18-5 31 4 31 29" strokeWidth="3.500" /><Line d="M10 14h15l24 23v14" strokeDasharray="2 2.500" /><Sq x={25} y={14} /><Sq x={49} y={37} /></g>, 1],
  [<path d="M15 10l31 8v12l-6-4-1-2-3 0-1 24 4 2-4 3-14-4v-3l5-2 1-25-5-1-3 4-5-3z" fill="#6b83f2" stroke={K} strokeWidth="2.200" />],
  [<g><rect x="14" y="34" width="12" height="12" fill="url(#gPage)" stroke={K} strokeWidth="2" /><rect x="38" y="10" width="12" height="12" fill="url(#gBlue)" stroke={K} strokeWidth="2" /><Line d="M26 33l10-11M29 24l8-2-1 8" /></g>, 1],
  [<g stroke={K} strokeWidth="2"><rect x="14" y="10" width="12" height="12" fill="url(#gBlue)" /><rect x="14" y="34" width="12" height="12" fill="url(#gPage)" /><rect x="38" y="16" width="12" height="12" fill="url(#gBlue)" /><rect x="30" y="22" width="12" height="12" fill="url(#gBlue)" /><rect x="38" y="38" width="12" height="12" fill="url(#gBlue)" /></g>],
  [<g><rect x="10" y="10" width="10" height="28" fill="url(#gPage)" stroke={K} strokeWidth="2" /><path d="M25 40l20-20 8 7-21 20z" fill="url(#gBlue)" stroke={K} strokeWidth="2" /><Line d="M20 14c8 0 14 2 19 7M40 14l-1 8-7-1" /></g>],
  [<g><path d="M14 21v18l20 9 14-9V18z" fill="#6b83f2" stroke={K} strokeWidth="2" /><path d="M14 21l14-11 20 8-14 9z" fill="#bccbfa" stroke={K} strokeWidth="1.500" /><path d="M34 27v21l14-9V18z" fill="#3348b0" /><path d="M26 34l8 3 7-5v8l-7 8-8-3z" fill="#fff" stroke={K} strokeWidth="1.500" /></g>, 1],
  [<g><path d="M18 32h34l-7 10H10z" fill="url(#gBlue)" stroke={K} strokeWidth="2" /><path d="M17 38h4V20h4l-6-9-6 9h4zM29 38h4V20h4l-6-9-6 9h4zM41 38h4V20h4l-6-9-6 9h4z" fill="#fff" /></g>, 1],
  [<g stroke={K} strokeWidth="2">{[12, 26, 40].map((x, i) => [11, 25, 39].map((y, j) => <rect key={x + "-" + y} x={x} y={y} width="8" height="8" fill={j === 2 ? (i ? "#6b83f2" : "#fff") : j ? "#a5b7f8" : "#d2dcff"} />))}</g>, 1],
  [<g><rect x="21" y="11" width="18" height="10" fill="#ddd" stroke={K} strokeWidth="2" /><rect x="25" y="25" width="10" height="9" fill="#ddd" stroke={K} strokeWidth="2" /><rect x="23" y="38" width="14" height="12" fill="#ddd" stroke={K} strokeWidth="2" /><path d="M30 8v44" stroke="#d3362f" strokeWidth="3" /></g>, 1],
  [<g><path d="M14 18l8-5 8 4v26l-6 6-10-4z" fill="#f0f0f0" stroke={K} strokeWidth="2" /><path d="M30 9l12 6-8 14z" fill="#fff" stroke={K} strokeWidth="2" /><path d="M24 44l9-26 7-4 9 4-3 12-7 17-5 4z" fill="#b9caff" stroke={K} strokeWidth="2" /><path d="M48 18l-4 14-9 18 5-4 8-20z" fill="#2c46c0" /></g>, 1],
  [<path d="M12 31l5-3 6 10C28 26 38 16 50 10 38 21 30 32 22 47z" fill={K} stroke={K} strokeWidth="1.500" />, 1],
  [<g><path d="M11 21l11-8 14 5v16l-10 6-15-6z" fill="#ccc" stroke={K} strokeWidth="2" /><path d="M11 21l14 5 11-8M25 26v14" fill="none" stroke={K} strokeWidth="1.500" /><path d="M41 14l11 26c-4 6-19 6-22 0z" fill="url(#gGray)" stroke={K} strokeWidth="2" /></g>, 1],
  [<g><path d="M15 43l15-18 15 18z" fill="#e9c65a" stroke={K} strokeWidth="2" /><path d="M30 26l14 17H30z" fill="#b99a42" /><path d="M27 22l8-11 10-1 8 1v9l-7 1-7 3-5-1-4 1z" fill="#fff" stroke={K} strokeWidth="2" /><path d="M49 8h5v13h-5z" fill={K} /><path d="M31 20l6-6M35 21l5-5" stroke={K} strokeWidth="1.500" /></g>],
];

const Tool = ({ t }) => (
  <Glyph viewBox="0 0 60 60">{t[0]}{t[1] ? <Arrow /> : null}</Glyph>
);

/* ---------- small glyphs ---------- */

const Gear = ({ w = 51, h = 28, gx = 18, cx = 39 }) => (
  <Glyph $w={w} $h={h} viewBox={`0 0 ${w} ${h}`}>
    <g transform={`translate(${gx} ${h / 2})`} stroke="#222" fill="none">
      <circle r="5" strokeWidth="6" />
      {[0, 45, 90, 135].map((a) => <path key={a} d="M0-10.500v5M0 10.500v-5" strokeWidth="4" transform={`rotate(${a})`} />)}
    </g>
    <path d={`M${cx - 4} ${h / 2 - 1.500}l4 4.500 4-4.500`} fill="none" stroke="#222" strokeWidth="2.800" />
  </Glyph>
);
const Check = ({ on, off }) => (
  <Box $on={on} $off={off}>
    {on && <Glyph $w={24} viewBox="0 0 24 24"><path d="M6 12.500l4 4.500 7.500-11" fill="none" stroke="#fff" strokeWidth="2.800" strokeLinecap="round" strokeLinejoin="round" /></Glyph>}
  </Box>
);
const Stepper = ({ c = "#333", w = 12 }) => (
  <Glyph $w={w} $h={20} viewBox="0 0 12 20"><path d="M2 6.500L6 2l4 4.500M2 13.500L6 18l4-4.500" fill="none" stroke={c} strokeWidth="2.200" /></Glyph>
);
const Bulb = ({ lit }) => (
  <Glyph $w={26} $h={32} viewBox="0 0 26 32">
    <path d="M13 1.500C5 1.500 1 6 1 11c0 4 6 7 7 13h10c1-6 7-9 7-13 0-5-4-9.500-12-9.500z" fill={lit ? "#fce3b0" : "#f4f8fc"} stroke={lit ? "#f0dcb4" : "#93a0ae"} strokeWidth="1.300" />
    <path d="M9 25h8v3l-2 3h-4l-2-3z" fill={lit ? "#e6e6e6" : "#b3bac2"} />
    <path d="M8 11l4 3v10M18 11l-4 3" fill="none" stroke={lit ? "#fff3d4" : "#bccfdf"} strokeWidth="1.200" />
  </Glyph>
);
const Padlock = ({ open }) => (
  <Glyph $w={28} $h={30} viewBox="0 0 28 30" opacity={open ? 0.45 : 1}>
    <path d={open ? "M15 14V8c0-7 11-7 11 0v5" : "M7 14V9c0-9 14-9 14 0v5"} fill="none" stroke="#8d8d8d" strokeWidth="3" />
    <rect x={open ? 0 : 3.500} y="13" width="21" height="15" rx="1.500" fill="url(#gLock)" stroke={open ? "#c9a37a" : "#9a611a"} />
    <path d={open ? "M0 18h21M0 23h21" : "M4 18h20M4 23h20"} stroke="#f3cc8c" strokeWidth="1.200" />
  </Glyph>
);
const Diamond = ({ c }) => (
  <Glyph $w={32} $h={32} viewBox="0 0 32 32">
    {c === "#ffffff" ? <path d="M17 1l14 15-14 15" fill="none" stroke="#ddd" strokeWidth="1" /> : <path d="M16 2l14 14-14 14L2 16z" fill={c} stroke={c} strokeWidth="2" strokeLinejoin="round" />}
  </Glyph>
);

const G = { fill: "none", stroke: "#7b7b7d", strokeWidth: 2 };

function SidePanel({ rows, title, short }) {
  return (
    <RightPanel>
      <PanelHead $h={118}>
        <PanelTitle $left={121} $top={9}><Text w={249} size={21}>プロパティ: ビューポート</Text></PanelTitle>
        <PanelGear><Gear /></PanelGear>
        <PanelIcons $left={short ? 206 : 176} $top={7} $gap={14}>
          <Glyph $w={46} $h={40} viewBox="0 0 46 40">
            <g fill="none" stroke="#3c82f5" strokeWidth="2.400"><path d="M1 12h10l4-7h15l4 7h10v24H1z" /><circle cx="23" cy="25" r="13" fill="#ecebed" /><circle cx="23" cy="25" r="9" /></g>
          </Glyph>
          <Glyph $w={46} $h={42} viewBox="0 0 46 42"><g {...G}><rect x="2" y="3" width="42" height="37" strokeWidth="3" /><rect x="6" y="7" width="34" height="29" stroke="#b5b5b5" /><rect x="10" y="11" width="26" height="20" stroke="#b5b5b5" /></g></Glyph>
          {!short && <Glyph $w={46} $h={42} viewBox="0 0 46 42"><g {...G}><circle cx="12" cy="30" r="11" /><path d="M17 20a8 8 0 1 1 7 9" /><circle cx="34" cy="9" r="7.500" /></g></Glyph>}
        </PanelIcons>
      </PanelHead>
      <Props>
        <FieldRow $h={35} $mt={20} $pl={41} $gap={18}><Text w={86} size={20.500}>タイトル:</Text><FieldInput><Text w={title === "Top" ? 38 : 124} size={22}>{title}</Text></FieldInput></FieldRow>
        <FieldRow $h={30} $mt={15} $pl={61} $gap={17}><Text w={66} size={20.500}>サイズ:</Text><Text w={128} size={22}>1628 x 1288</Text></FieldRow>
        <FieldRow $h={30} $mt={14} $pl={40} $gap={8}><Check /><Text w={60}>ロック</Text></FieldRow>
        <Rule $mt={23} />
        <FieldRow $h={30} $mt={16}><Text w={40}>投影</Text></FieldRow>
        <FieldRow $h={30} $mt={2} $pl={42} $gap={9}><Radio /><Text w={40}>平行</Text></FieldRow>
        <FieldRow $h={30} $pl={42} $gap={9}><Radio $on /><Text w={60}>パース</Text></FieldRow>
        <FieldRow $h={30} $pl={42} $gap={9}><Radio /><Text w={96}>2点パース</Text></FieldRow>
        <Rule $mt={44} />
        <FieldRow $h={30} $mt={15}><Text w={40}>壁紙</Text></FieldRow>
        <FieldRow $h={30} $mt={15} $pl={50} $gap={80}><Text w={58}>選択...</Text><Stepper /></FieldRow>
        <FieldRow $h={30} $mt={14} $pl={40} $gap={8} $off><Check off /><Text w={100}>壁紙を表示</Text></FieldRow>
        <FieldRow $h={30} $mt={14} $pl={40} $gap={8} $off><Check off /><Text w={262}>壁紙をグレースケールで表示</Text></FieldRow>
      </Props>
      <PanelHead $h={118}>
        <PanelTitle $left={173} $top={9}><Text w={144} size={21}>パネル: レイヤ</Text></PanelTitle>
        <PanelGear><Gear /></PanelGear>
        <PanelIcons $left={55} $top={7} $gap={14}>
          <Glyph $w={46} $h={44} viewBox="0 0 46 44"><g fill="none" stroke="#2f78f2" strokeWidth="2.200"><path d="M23 3l22 13-22 13L1 16z" /><path d="M5 21l-4 3 22 13 22-13-4-3" /></g></Glyph>
          <Glyph $w={46} $h={44} viewBox="0 0 46 44"><g {...G}><path d="M22 4l21 12-8 5M28 25l-6 4L1 16 22 4M5 22l-4 3 22 12 4-2" /><path d="M29 19h12l5 5v20H29z" fill="#eaeaea" /></g></Glyph>
          <Glyph $w={46} $h={44} viewBox="0 0 46 44"><path d="M11 3h17l8 8v26H11zM28 3v9h8" {...G} strokeWidth="2.400" /></Glyph>
          <Glyph $w={46} $h={44} viewBox="0 0 46 44"><path d="M5 13l16-9 19 6v22l-15 9-20-6zM5 13l20 5 15-8M25 18v23" {...G} /></Glyph>
          <Glyph $w={46} $h={44} viewBox="0 0 46 44"><path d="M6 34c7-5 5-29 8-30h27c3 2 2 5 0 6h-6c1 8-2 22-4 25v5c-1 1-25 1-26-1-2-2-1-5 1-5h20l5 5" {...G} /></Glyph>
          <Glyph $w={46} $h={44} viewBox="0 0 46 44"><g {...G}><rect x="2" y="4" width="41" height="31" rx="2" /><rect x="6" y="8" width="33" height="22" /><path d="M18 35v5M27 35v5M12 41h21" /></g></Glyph>
          <Glyph $w={46} $h={44} viewBox="0 0 46 44"><g {...G} stroke="#6f6f71"><circle cx="22" cy="23" r="19.500" /><path d="M15 17c0-11 15-11 15-1 0 7-8 7-8 14" strokeWidth="3.200" /><path d="M22 33v4" strokeWidth="3.200" /></g></Glyph>
        </PanelIcons>
      </PanelHead>
      <Table>
        <HeadRow>
          <HeadCell $pl={60}><Text w={40}>名前</Text></HeadCell>
          <HeadCell /><HeadCell /><HeadCell /><HeadCell /><HeadCell />
          <HeadCell $pl={11}><Text w={40}>線種</Text></HeadCell>
          <HeadCell /><HeadCell $end />
        </HeadRow>
        {rows.map(([name, w, c, on], i) => (
          <LayerRow key={i}>
            <Cell $j="flex-start" $pl={54}><Text w={w} size={22}>{name}</Text></Cell>
            <Cell><Radio $on={on} /></Cell>
            <Cell><Bulb lit={on} /></Cell>
            <Cell><Padlock open={on} /></Cell>
            <Cell><Swatch $c={c} /></Cell>
            <Cell $j="flex-start" $pl={4}><Ring /></Cell>
            <Cell $j="flex-start" $pl={9} $gap={47}><Text w={40}>実線</Text><Stepper /></Cell>
            <Cell><Diamond c={c} /></Cell>
          </LayerRow>
        ))}
      </Table>
      <PanelFoot>
        <Segmented><Glyph $w={96} $h={28} viewBox="0 0 96 28"><path d="M14 13h18M23 4v18" stroke="#77767a" strokeWidth="2" /><path d="M49 3v22" stroke="#dad8dd" strokeWidth="2" /><path d="M65 13h17" stroke="#bbb9be" strokeWidth="2" /></Glyph></Segmented>
        <GearMenu><Gear w={64} h={33} gx={22} cx={48} /></GearMenu>
      </PanelFoot>
    </RightPanel>
  );
}

/* ---------- model drawing ---------- */

const outlines = [
  "M301 190L332 176 331 169 364 153 372 156 404 142 402 136 432 122 440 125 470 110 468 104 495 91 504 94 534 80 556 95 565 91 585 106Q558 120 570 140L362 243 341 227 332 231 313 214 320 208Z",
  "M416 306L636 191C615 160 650 148 675 148 705 150 725 175 689 193L712 209 721 206 745 223 706 245 709 252 680 268 671 265 639 283 642 289 611 306 603 302 569 321 572 328 540 346 532 342 484 367 461 346 469 340 447 320 437 325Z",
  "M655 172a15 10 0 1 0 30 0a15 10 0 1 0-30 0",
  "M1089 133L1104 124 1112 127 1153 103 1150 97 1173 83 1208 101 1216 98 1241 113 1239 119 1265 134 1273 131 1300 147 1298 153 1325 168 1333 164 1361 180 1358 186 1395 208 1371 224 1361 221 1319 249 1325 256 1311 266Z",
  "M938 230L964 213 962 206 989 190 997 195 1013 186 1219 318 1206 327 1209 335 1185 353 1175 349 1145 369 1112 349 1104 353 1076 333 1080 326 1051 307 1043 312 1016 293 1021 287 993 268 985 273 958 254 963 248Z",
  "M319 595L358 571 354 563 394 538 402 544 444 520 471 545 481 540 507 565 498 573 525 599 536 592 562 619 554 627 583 655 593 648 621 676 612 683 640 714 599 744 605 752 563 782 554 774 511 803Z",
  "M29 752L80 722 86 730 135 702 131 692 175 666 376 910 330 943 320 934 268 970 274 981 222 1018 185 968 171 978 145 941 158 931 132 895 118 904 94 870 107 860 81 825 68 834 45 801 58 793Z",
  "M908 725L945 696 939 686 974 660 983 667 1019 640 1013 631 1047 605 1056 612 1090 587 1084 578 1116 554 1125 561 1159 536 1194 562 1203 555 1238 581Q1207 608 1237 637L1014 818 978 788 968 796 933 766 942 756Z",
  "M1129 939L1361 731C1325 700 1340 658 1390 657 1445 660 1462 710 1431 735L1473 766 1482 758 1525 789 1486 830 1495 840 1464 872 1452 863 1417 897 1427 908 1394 941 1382 931 1345 967 1356 978 1320 1014 1307 1004 1257 1053 1213 1013 1223 1003 1179 964 1168 973Z",
  "M1373 699a20 17 0 1 0 40 0a20 17 0 1 0-40 0",
];
const farOutlines = [
  "M729 329L740 323 775 319 785 311 823 304 855 308 875 309 895 314 891 319 905 328 780 367 765 363 750 364 729 360",
  "M876 391L1007 347C980 341 980 331 1028 331 1078 332 1075 344 1064 346L1106 357 1118 355 1139 360 1110 376 1090 376 1072 387 1080 390 1042 400 1034 399 1015 409 1005 407 985 413 948 405 930 404 915 398 900 397Z",
  "M1014 340a14 3 0 1 0 28 0a14 3 0 1 0-28 0",
  "M831 541L851 534 883 528 880 523 905 514 1232 589 1215 596 1205 594 1180 607 1187 610 1163 619 1110 605 1088 608 1058 600 1052 594 1015 588 1000 586 968 577 962 573 925 565 905 566 883 557 877 551Z",
  "M987 492L1008 487 1003 481 1026 471 1052 466 1072 471 1090 469 1122 475 1128 480 1165 487 1195 487 1220 498 1215 503 1252 512 1275 510 1310 520 1315 524 1350 529 1331 537 1338 543 1285 556Z",
  "M1528 433L1495 428 1480 423 1450 420 1435 414 1400 410 1385 405 1345 402 1330 397 1300 391 1264 383 1237 391 1232 398 1205 400 1202 408 1172 412 1172 421 1140 429 1140 436 1112 438 1155 446 1170 446 1205 455 1210 460 1250 466 1265 464 1300 474 1310 480 1345 486 1362 485 1395 495 1430 503 1460 493 1460 486 1490 478 1487 471 1515 463 1528 458",
  "M1528 313L1512 311 1500 307 1478 304 1455 311 1457 316 1423 325 1450 329 1470 332 1528 343",
  "M1528 372L1383 346 1350 352 1350 357 1337 363 1375 367 1390 373 1430 380 1455 381 1465 388 1505 390 1528 397",
  "M1528 93L1515 99 1500 99 1489 107 1510 111 1528 115",
];

function Model() {
  const wire = { fill: "none", stroke: "#ee14f2", strokeWidth: 1.6, vectorEffect: "non-scaling-stroke" };
  const edge = (w) => ({ stroke: "#ff00ff", strokeWidth: w, vectorEffect: "non-scaling-stroke" });
  return (
    <SceneSvg viewBox="414 340 1628 1288">
      <g transform="translate(500 1040) scale(.714286 .333333)">{outlines.map((d) => <path key={d} d={d} {...wire} />)}</g>
      <g transform="translate(1360 780) scale(.446429 .333333)" fill="none">
        {farOutlines.map((d) => <path key={d} d={d} {...wire} />)}
        <path d="M102 318L463 398 447 928 93 812Z" fill="#962193" />
        <path d="M463 398L727 322 709 815 447 928Z" fill="#c72cca" />
        <path d="M102 318L371 252 727 322 463 398Z" fill="#6d086c" />
        <path d="M722 492C740 495 748 525 747 555 745 605 730 635 716 645z" fill="#e010e4" {...edge(2)} />
        <path d="M683 585C680 530 700 492 720 492 742 505 748 615 714 646L712 640 700 600z" fill="#c72cca" />
        <path d="M683 585C680 530 700 492 720 492" {...edge(2.5)} />
        <ellipse cx="713" cy="571" rx="10" ry="30" fill="#d423d8" {...edge(3)} />
        <path d="M102 318L371 252 727 322 463 398Z" {...edge(3)} />
        <path d="M130 318L185 311 190 303 215 299 225 292 270 287 280 277 320 271 330 264 360 262M380 256L420 265 440 272 480 276 505 284 560 292 580 300 640 306 655 312 700 318M463 392L500 382 510 376 550 368 570 356 620 349 640 338 690 330M120 322L170 328 200 342 255 350 300 362 350 376 390 378 463 392" {...edge(2.5)} />
        <path d="M102 318L93 812 447 928 463 398M463 398L447 928 709 815 714 646M722 492L727 322M472 398L460 665M470 420L466 500" {...edge(2.5)} />
        <path d="M93 570L452 663" {...edge(3.5)} />
        <path d="M455 665L683 586" {...edge(3.5)} />
        <path d="M98 340L156 354 158 332M202 342L202 364 249 375 251 352M297 367L297 386 346 397 348 377M396 382L396 408 463 421M98 418L110 420 108 497 96 495M463 502L445 502 442 583 458 587M96 572L108 575 105 642 94 642M93 716L104 718 102 795M93 794L148 808 148 827M192 842L192 823 239 837 238 858M285 870L285 852 333 868 333 888M382 905L382 884 447 905M440 665L437 740 460 744 457 822 434 822 432 898M447 905L492 888 492 908M528 890L528 870 565 855 565 872M598 860L598 843 632 828 632 845M665 830L665 812 709 795M463 420L508 406 510 385M544 398L546 376 582 370 582 385 544 398M617 360L617 375 650 365 650 352M686 342L686 357 727 342M715 345L715 428 724 430" {...edge(2)} />
      </g>
      <g fill="none" stroke="#6a6a6a" strokeWidth="1.500"><path d="M487 1497v59l42-9M487 1556l-41-9" /></g>
      <g fill="#5f5f5f" fontFamily="'DejaVu Sans', sans-serif" fontSize="25"><text x="491" y="1499">z</text><text x="450" y="1546">y</text><text x="532" y="1548">x</text></g>
    </SceneSvg>
  );
}

/* ---------- dock icons, 76 x 76, body 5..71 ---------- */

const Tile = ({ f, s }) => <rect x="5" y="5" width="66" height="66" rx="15" fill={f} stroke={s || "none"} strokeWidth="1" />;
const Adobe = ({ bg, c, t }) => (
  <g><Tile f={bg} s="rgba(255,255,255,.12)" /><text x="38" y="50" fill={c} fontSize="36" fontWeight="700" textAnchor="middle" fontFamily="'Open Sans', sans-serif" textLength="39" lengthAdjust="spacingAndGlyphs">{t}</text></g>
);
const petals = ["#f29a38", "#f3d33c", "#b5cf55", "#69b67e", "#6aa0dc", "#8f79c4", "#c66aa2", "#ea5348"];

const dock = [
  [<g><Tile f="#e3e8ee" /><path d="M20 5h20q-8 18-7 38h8q0 15 3 28H20A15 15 0 0 1 5 56V20A15 15 0 0 1 20 5z" fill="url(#gFinder)" /><path d="M22 24v7M53 24v7" stroke="#1d2b3c" strokeWidth="3.500" strokeLinecap="round" /><path d="M17 48q21 18 42 0M40 5q-8 18-7 38h8q0 15 3 28" fill="none" stroke="#1d2b3c" strokeWidth="2.200" /></g>, 1],
  [<g><Tile f="#c9c6d6" />{["#7ad65b", "#f5b73a", "#f29b35", "#c03430", "#8f9aa0", "#e04a63", "#9b4fd0", "#46a0f5", "#63cfae"].map((c, i) => <rect key={c} x={16 + (i % 3) * 16} y={16 + Math.floor(i / 3) * 16} width="12" height="12" rx="3" fill={c} />)}</g>],
  [<g><Tile f="url(#gStore)" /><g stroke="#fff" strokeWidth="5" strokeLinecap="round"><path d="M41 19L24 48M35 19l19 37M17 48h24M49 48h10M21 54l-1 3" /></g></g>],
  [<g><Tile f="url(#gSet)" /><circle cx="38" cy="38" r="29" fill="#3a3a3a" /><circle cx="38" cy="38" r="26" fill="none" stroke="#aaa" strokeWidth="3" strokeDasharray="2 2" /><circle cx="38" cy="38" r="20" fill="#666" stroke="#222" strokeWidth="3" /><path d="M38 38L27 21M38 38h20M38 38L27 55" stroke="#222" strokeWidth="4" /><circle cx="38" cy="38" r="6" fill="#999" stroke="#222" strokeWidth="2" /><circle cx="64" cy="11" r="15" fill="#e9503f" /><text x="64" y="18" fill="#fff" fontSize="19" textAnchor="middle">1</text></g>],
  [<g><Tile f="#fbfbfb" />{petals.map((c, i) => <ellipse key={c} cx="38" cy="22" rx="9" ry="13.500" fill={c} opacity=".85" transform={`rotate(${i * 45} 38 38)`} />)}</g>],
  [<g><Tile f="url(#gMusic)" /><path d="M30 55V24l23-6v31" fill="none" stroke="#fff" strokeWidth="4" /><path d="M28 23l27-7v9l-27 7z" fill="#fff" /><ellipse cx="25" cy="55" rx="7" ry="5.500" fill="#fff" /><ellipse cx="48" cy="49" rx="7" ry="5.500" fill="#fff" /></g>],
  [<g><Tile f="#f7fafd" /><path d="M6 22h64M6 42h64M6 58h64M22 6v64M54 6v64" stroke="#cfe0f0" strokeWidth="2" /><path d="M38 32v30" stroke="#888" strokeWidth="4" /><path d="M30 63h17" stroke="#444" strokeWidth="2" /><path d="M20 13h36l3 18H17z" fill="#2f86dc" /><path d="M23 15h30l1 12H22z" fill="#f3f8fd" /><circle cx="38" cy="21" r="5.500" fill="#4fb35a" /><path d="M38 21v-5.500a5.500 5.500 0 0 1 5 8z" fill="#ec5b3c" /></g>],
  [<g><Tile f="#f8f8f8" /><circle cx="38" cy="38" r="27" fill="#d75041" /><path d="M38 38L14.600 24.500A27 27 0 0 0 36 65L50 44z" fill="#389a57" /><path d="M38 38l12 6-14 21A27 27 0 0 0 61.500 25H38z" fill="#f6cd4a" /><circle cx="38" cy="38" r="13" fill="#fff" /><circle cx="38" cy="38" r="10.500" fill="#4a83ea" /></g>, 1],
  [<g><rect x="3" y="3" width="70" height="70" rx="16" fill="#58be3b" /><path d="M38 14C9 14 7 46 29 52l8 3-1 7c10-5 27-17 27-29 0-11-11-19-25-19z" fill="#fff" /><text x="38" y="40" fontSize="13" fontWeight="800" fill="#49ad2f" textAnchor="middle">LINE</text></g>, 1],
  [<g><Tile f="url(#gWa)" /><path d="M14 62l4-13a25 25 0 1 1 9 9z" fill="none" stroke="#fff" strokeWidth="5" /><path d="M30 25c-8 6 2 27 19 26 6-3 4-8 0-9l-5 2c-4-1-8-5-9-9l2-4c-1-4-3-7-7-6z" fill="#fff" /></g>, 1],
  [<g><Tile f="#fff" /><g strokeWidth="9" strokeLinecap="round"><path d="M19 32h12M31 19v2" stroke="#54c0e8" /><path d="M44 19v13M57 32h-1" stroke="#45b37d" /><path d="M57 44H45M45 56v1" stroke="#e8b23a" /><path d="M31 44v13M19 44h1" stroke="#d6244e" /></g></g>, 1],
  [<g><Tile f="#fdfdfd" /><path d="M38 12a26 25 0 1 1-9 49l-7 3v-7A25 25 0 0 1 38 12z" fill="url(#gMes)" /><path d="M22 45l12-13 8 6 12-6-12 13-8-6z" fill="#fff" /></g>],
  [<g><Tile f="#a82318" /><path d="M18 57c14-8 22-24 20-36-2-5-6-1-4 6 3 12 12 21 24 20 3-5-18-5-37 4-6 4-6 7-3 6z" fill="none" stroke="#fff" strokeWidth="3" /></g>, 1],
  [<Adobe bg="#2d0302" c="#f29a2e" t="Ai" />, 1],
  [<Adobe bg="#081e36" c="#4ea8f8" t="Ps" />],
  [<Adobe bg="#470a20" c="#f2436b" t="Id" />],
  [<Adobe bg="#06045a" c="#a099f8" t="Pr" />],
  [<Adobe bg="#440a37" c="#f364ef" t="Xd" />],
  [<g transform="rotate(-8 38 38)"><rect x="3" y="3" width="71" height="71" rx="4" fill="#484848" /><path d="M4 5q17 4 25 22l10 8 14-3 5-10 2 12 14-8-12 20-12 6 8 8-2 10-12 2-12-12-12 4-10-16-6-12z" fill="#ededed" /><path d="M4 24q10 12 20 10l6-8M16 36l4 10 10 4M38 58l10 8 6-6" stroke="#333" strokeWidth="2.500" fill="none" /><path d="M26 44q14-6 26 2-4 10-12 10-10-2-14-12z" fill="#3c3c3c" /><path d="M25 42l10 3" stroke="#e33" strokeWidth="4" /><path d="M48 10h20L59 32" fill="none" stroke="#a9a9a9" strokeWidth="5" /></g>, 1],
  [<g><circle cx="39" cy="36" r="31" fill="#a3a3a3" /><path d="M12 30c10-2 18-14 26-15 14 2 22 20 37 13 3 4 1 8-4 10-14 4-20 20-34 31l-8-2z" fill="#2a628c" /><path d="M1 33l18-4c7-4 12-10 17-12-4 16 6 24 14 26-6 8-9 18-15 26L2 60z" fill="#d2a23e" /><path d="M50 42q14-14 22-13" stroke="#6cc4f0" strokeWidth="4" fill="none" /><path d="M29 22q0 16 14 28M24 26q0 18 14 32M17 29q2 18 14 36M11 31q2 16 10 32M5 33l6 26M1 46l36 14M1 53l34 12" fill="none" stroke="#332408" strokeWidth="1.800" /></g>],
  [<g><Tile f="url(#gFus)" /><path d="M5 50q33-10 66-5v11a15 15 0 0 1-15 15H20A15 15 0 0 1 5 56z" fill="#fff" opacity=".6" /><path d="M26 14l6-3h22v9H43l-2 10h13l-2 8H42q-1 14-5 19l-11-1z" fill="url(#gFusF)" /><text x="50" y="66" fontSize="12.500" fill="#dd7e2c" textAnchor="middle">360</text></g>],
  [<g><g stroke="#dd8332" strokeWidth="9" strokeLinecap="round"><path d="M5 54L34 32M15 24h24M40 11l18 14" /></g><circle cx="48" cy="42" r="26" fill="#dd8332" /><circle cx="48" cy="42" r="15.500" fill="#fff" /><circle cx="48" cy="42" r="10.500" fill="#305a8c" /></g>],
  [<g><rect x="2" y="1" width="72" height="73" rx="20" fill="url(#gZoom)" /><rect x="16" y="26" width="32" height="25" rx="5" fill="#fff" /><path d="M50 34l11-8v25l-11-8z" fill="#fff" /></g>],
  [<g><circle cx="38" cy="37" r="37" fill="#9aa6b5" /><path d="M12 13C38 12 46 46 75 32c1 8 0 12-2 18C44 52 32 22 3 30q2-9 9-17zM24 3c24-6 42 8 49 22C56 28 44 10 24 3zM3 46c20-4 34 20 56 22-20 12-50 2-56-22z" fill="#e6e8ea" /><rect x="17" y="54" width="42" height="21" rx="2" fill="#333" /><text x="38" y="72" fill="#fff" fontSize="19" textAnchor="middle" fontFamily="'Open Sans', sans-serif">Pro</text></g>],
  [<g><Tile f="#a3acac" /><rect x="7" y="7" width="62" height="62" rx="13" fill="#000" /><rect x="12" y="12" width="52" height="52" rx="9" fill="#222" /><path d="M17 18l7 5-7 5M27 30h9" fill="none" stroke="#fff" strokeWidth="2.500" /></g>],
  null,
  [<g><Tile f="#f5f5f5" /><rect x="11" y="10" width="54" height="30" fill="#9bbcf0" /><path d="M11 40h54v26H18l-7-4z" fill="#2b4773" /><path d="M12 52l8-6 10 10 2 9H18z" fill="#d8e0e8" /><path d="M44 46h20l5 22q-15 12-30 0z" fill="#c8ccd0" stroke="#888" /><rect x="40" y="37" width="28" height="14" rx="4" fill="#111" /></g>],
  [<g><Tile f="#f0f0ec" /><path d="M5 22v-2A15 15 0 0 1 20 5h36a15 15 0 0 1 15 15v2z" fill="#f6cf40" /><path d="M5 25h66" stroke="#aaa" strokeWidth="1.500" strokeDasharray="2 2" /><path d="M6 38h64M6 54h64" stroke="#d4d4d0" strokeWidth="1.500" /></g>],
  [<g><Tile f="#fcfcfc" /><path d="M5 22h66M5 31h66M5 40h66M5 49h66M5 58h66" stroke="#b9b9b9" strokeWidth="1.500" /><path d="M17 5v66" stroke="#ddd" /><path d="M66 0L30 72" stroke="#6d7782" strokeWidth="6" strokeLinecap="round" /><path d="M66 0L31 69" stroke="#c9d5df" strokeWidth="2.500" /></g>],
  null,
  [<g><path d="M15 0h26v76H15z" fill="#e9e9e9" /><path d="M18 2h28l12 14v60H18z" fill="#fafafa" stroke="#ddd" /><path d="M40 2l18 3v22l-16-4z" fill="#dedede" /><path d="M20 26h10M20 40h12M20 44h9M20 60h8M22 74h10" stroke="#999" strokeWidth="1.500" /></g>],
  [<g><path d="M10 8l8 64q20 8 40 0l8-64z" fill="#d8d8da" /><path d="M14 2l12 8 8-9 10 8 12-7 8 10-20 8H16z" fill="#fff" /><path d="M18 10l6 6M30 6l4 9M44 8l-6 8M54 8l-4 7" stroke="#567" strokeWidth="2.500" /><ellipse cx="38" cy="10" rx="28" ry="6" fill="none" stroke="#c4c4c8" strokeWidth="2" /><path d="M24 24l4 42M50 24l-4 42" stroke="#e4e4e6" strokeWidth="5" /></g>],
];

/* ---------- data ---------- */

const menus = [["Rhino 7", 94, 1], ["ファイル", 94], ["編集", 48], ["ビュー", 72], ["曲線", 48], ["サーフェス", 120], ["SubD", 66, 0], ["ソリッド", 95], ["メッシュ", 95], ["寸法", 49], ["変形", 48], ["ツール", 72], ["解析", 48], ["レンダリング", 144], ["ウィンドウ", 120], ["ヘルプ", 72]];
const tabs = [["標準", 34, 77], ["作業平面", 67, 110], ["ビューの設定", 99, 141], ["表示", 34, 75], ["選択", 34, 76], ["ビューポートレイアウト", 181, 225], ["表示/非表示", 95, 135], ["変形", 34, 77], ["曲線ツール", 83, 125], ["サーフェスツール", 133, 174], ["ソリッドツール", 115, 158], ["SubD ツール", 102, 144], ["メッシュツール", 116, 158], ["レンダリングツール", 148, 192], ["製図", 34, 77], ["V7の新機能", 94, 135]];
const modes = [["グリッドスナップ", 176, 221, 18, 1], ["直交モード", 108, 154, 0, 1], ["平面モード", 108, 187, 0, 0], ["スマートトラック", 175, 222, 17, 1], ["ガムボール", 109, 153, 0, 1], ["ヒストリ", 84, 166, 0, 0]];
const snaps = [["端点", 1], ["近接点", 1], ["点", 0], ["中点", 1], ["中心点", 1], ["交点", 1], ["垂直点", 1], ["接点", 1], ["四半円点", 0], ["ノット", 0], ["頂点", 1], ["曲線上", 2], ["サーフェス上", 2], ["ポリサーフェス上", 2], ["メッシュ上", 2], ["投影", 0], ["スマートトラック", 1]];
const layers = [["mo...", 48, "#000000"], ["pie...", 48, "#ec4ff5", true], ["grid", 40, "#ffffff"], ["gri...", 44, "#c6321a"], ["gri...", 44, "#1430f5"], ["co...", 42, "#8548cd"]];
const backLayers = [["デ...", 48, "#000000"], ["レ...", 48, "#000000"]];

export default function App() {
  return (
    <Desktop>
      <Global />
      <MenuBar>
        <Glyph $w={32} $h={36} viewBox="0 0 32 36">
          <path d="M22 1c0 4-3 7-6 7 0-4 2-6 6-7zM16 10c2 0 4-2 7-2 2 0 5 1 7 4-6 4-5 11 1 13-2 5-5 9-8 9-2 0-3-1-6-1s-4 1-6 1C6 34 1 26 1 19S6 8 11 8c2 0 4 2 5 2z" fill="#f1edf8" />
        </Glyph>
        <MenuItems>
          {menus.map(([t, w, b]) => <Text key={t} w={w} size={b === undefined ? 24 : 25} weight={b ? 700 : 400}>{t}</Text>)}
        </MenuItems>
        <StatusItems>
          <StatusSlot $w={66}><Glyph $w={18} $h={30} viewBox="0 0 18 30"><path d="M2 8l14 14-7 7V1l7 7L2 22" fill="none" stroke="#f1edf8" strokeWidth="2" /></Glyph></StatusSlot>
          <StatusSlot $w={76}><InputBadge><Text size={21} weight={500} color="#36118f">あ</Text></InputBadge></StatusSlot>
          <StatusSlot $w={84}><Glyph $w={50} $h={24} viewBox="0 0 50 24"><rect x="1" y="1" width="44" height="22" rx="6" fill="none" stroke="#a99cd8" strokeWidth="2" /><rect x="4" y="4" width="23" height="16" rx="3" fill="#f1edf8" /><path d="M48 8q3 4 0 8z" fill="#a99cd8" /></Glyph></StatusSlot>
          <StatusSlot $w={76}><Glyph $w={34} $h={26} viewBox="0 0 34 26"><g fill="none" stroke="#f1edf8" strokeWidth="4"><path d="M2 9q15-13 30 0" /><path d="M8 15q9-8 18 0" /></g><path d="M12 20q5-4 10 0l-5 5z" fill="#f1edf8" /></Glyph></StatusSlot>
          <StatusSlot $w={62}><Glyph $w={27} viewBox="0 0 27 27"><circle cx="13.500" cy="13.500" r="12" fill="none" stroke="#f1edf8" strokeWidth="2.400" /><circle cx="13.500" cy="10.500" r="4.500" fill="#f1edf8" /><path d="M5 21q8-9 17 0-8 8-17 0z" fill="#f1edf8" /></Glyph></StatusSlot>
          <StatusSlot $w={66}><Glyph $w={26} viewBox="0 0 26 26"><circle cx="11" cy="11" r="9" fill="none" stroke="#f1edf8" strokeWidth="2.500" /><path d="M17 17l8 8" stroke="#f1edf8" strokeWidth="3" /></Glyph></StatusSlot>
          <StatusSlot $w={64}><Glyph $w={28} $h={26} viewBox="0 0 28 26"><rect x="1.500" y="1.500" width="25" height="10" rx="5" fill="none" stroke="#f1edf8" strokeWidth="2.200" /><circle cx="8" cy="6.500" r="4" fill="#f1edf8" /><rect x="0" y="14" width="28" height="12" rx="6" fill="#f1edf8" /><circle cx="21" cy="20" r="4" fill="#2a0b95" /></Glyph></StatusSlot>
          <StatusSlot $w={62}><Glyph $w={28} viewBox="0 0 28 28"><circle cx="14" cy="14" r="13.500" fill="#3f7d8c" /><path d="M3 8A13 13 0 0 1 24 6L14 14z" fill="#c04a5e" /><path d="M4 22Q14 28 24 20L14 13z" fill="#3a4bb0" /><circle cx="15" cy="14" r="4.500" fill="#e9f6f8" /></Glyph></StatusSlot>
          <StatusSlot $w={176}><Text w={146} size={24}>2月14日(月)</Text></StatusSlot>
          <Text w={72} size={24}>23:11</Text>
        </StatusItems>
      </MenuBar>

      <Window $x={0} $y={50} $w={2880} $h={1634} $bg="#fff">
        <BrowserTabs>
          <Light $c="#c3a59b" $b="#a98c82" />
          <BrowserTab />
          <Glyph $w={28} viewBox="0 0 28 28"><path d="M2 14l12 14L27 13" fill="none" stroke="#4b3b38" strokeWidth="3" /></Glyph>
        </BrowserTabs>
        <BrowserBar>
          <Glyph $w={30} $h={26} viewBox="0 0 30 26"><path d="M30 13H3M14 2L3 13l11 11" fill="none" stroke="#8a8080" strokeWidth="2.600" /></Glyph>
          <Glyph $w={60} $h={56} viewBox="0 0 60 56"><circle cx="30" cy="28" r="27" fill="none" stroke="#c0403a" strokeWidth="2" /></Glyph>
        </BrowserBar>
      </Window>

      <Window $x={322} $y={70} $w={2516} $h={1609} $shadow="0 0 1px 1px rgba(0,0,0,.22), 0 14px 44px rgba(0,0,0,.22)">
        <TitleArea $dim>
          <TitleRow />
          <ModeRow><RightTools><PanelToggle $c="#aeacb1" $side="right" /></RightTools></ModeRow>
        </TitleArea>
        <TabStrip $dim />
        <ToolBar $dim />
        <Body><SidePanel rows={backLayers} title="Top" short /></Body>
        <StatusBar />
      </Window>

      <Window $x={58} $y={76} $w={2516} $h={1608} $shadow="0 0 1px 1px rgba(0,0,0,.3), 0 10px 70px rgba(0,0,0,.48)">
        <TitleArea>
          <TitleRow>
            <Lights><Light $c="#ee6a5f" $b="#d95a50" /><Light $c="#f5bf4f" $b="#dba63c" /><Light $c="#61c655" $b="#50ae44" /></Lights>
            <TitleText>
              <Glyph $w={24} $h={30} viewBox="0 0 24 30"><path d="M1 0h17l5 6v24H1z" fill="#eee" stroke="#bbb" /><path d="M3 2l10 5 3 8 6 2v6l-7-1-4-6-7-4z" fill="#222" /><path d="M6 12l6 6M9 5l4 8" stroke="#ddd" strokeWidth="2" /><path d="M7 27h10" stroke="#999" /></Glyph>
              <Text w={248} size={25} weight={700} color="#464549">reiponのコピー.3dm</Text>
            </TitleText>
          </TitleRow>
          <ModeRow>
            <PanelToggle $c="#2f6fec" $side="left" />
            <Modes>
              {modes.map(([t, tw, w, gap, on]) => <Mode key={t} $w={w} $gap={gap} $on={on}><Text w={tw} size={22} weight={500}>{t}</Text></Mode>)}
            </Modes>
            <RightTools>
              <Glyph $w={134} $h={46} viewBox="0 0 134 46">
                <g fill="none" stroke="#6d6c70" strokeWidth="2.200"><ellipse cx="21" cy="10" rx="15" ry="4" /><path d="M6 10q0 6 9 15l3 4v15h7V29l3-4q9-9 8-15M37 2h7v7M1 37v7h7" /></g>
                <g fill="none" stroke="#9e9da1" strokeWidth="2"><circle cx="94" cy="24" r="18" /><path d="M94 24h21" stroke="#666" strokeWidth="2.500" /></g><rect x="90" y="20" width="8" height="8" fill="#555" />
              </Glyph>
              <Glyph $w={46} $h={46} viewBox="0 0 46 46"><g fill="none" stroke="#6d6c70" strokeWidth="2.200"><circle cx="24" cy="24" r="20" /><circle cx="24" cy="24" r="11" /></g></Glyph>
              <LayerField><Swatch $c="#dc3fea" /><Text w={56} size={22} color="#67666a">piece</Text></LayerField>
              <PanelToggle $c="#2f6fec" $side="right" />
            </RightTools>
          </ModeRow>
        </TitleArea>
        <TabStrip>
          {tabs.map(([t, tw, w], i) => <ToolTab key={i} $w={w} $active={i === 0}><Text w={tw} size={17} weight={700} lh={24}>{t}</Text></ToolTab>)}
          <TabFill />
        </TabStrip>
        <ToolBar><ToolRun>{top.map((t, i) => <Tool key={i} t={t} />)}</ToolRun></ToolBar>
        <Body>
          <LeftPanel>
            <LeftHead />
            <CommandInput><Text w={92} size={23} color="#bfbec1">コマンド</Text></CommandInput>
            <ToolGrid>{side.map((t, i) => <Tool key={i} t={t} />)}</ToolGrid>
            <SnapList>
              <SnapRadio><Radio $on /><Text w={40}>継続</Text></SnapRadio>
              <SnapRadio><Radio /><Text w={40}>一時</Text></SnapRadio>
              <SnapGap />
              {snaps.map(([t, s], i) => <SnapRow key={i} $off={s === 2}><Check on={s === 1} off={s === 2} /><Text w={t.length * 20}>{t}</Text></SnapRow>)}
            </SnapList>
          </LeftPanel>
          <Viewport>
            <ViewTabs>
              <ViewIcons>
                <Glyph $w={31} $h={27} viewBox="0 0 31 27"><path d="M1 1h29v25H1zM15.500 1v25M1 13.500h29" fill="none" stroke="#858585" strokeWidth="1.500" /><path d="M1 2h6M16 2h6M1 14.500h6M16 14.500h6" stroke="#666" strokeWidth="2.500" /></Glyph>
                <Glyph $w={31} $h={27} viewBox="0 0 31 27"><path d="M1 1h29v25H1z" fill="none" stroke="#6a9cf7" strokeWidth="1.600" /><path d="M1 2h6" stroke="#2f73f0" strokeWidth="3" /></Glyph>
              </ViewIcons>
              <ViewTab $w={222} $pad={38} $active><Text w={142} size={25}>Perspective</Text></ViewTab>
              <ViewTab $w={124} $pad={38}><Text w={43} size={25}>Top</Text></ViewTab>
              <ViewTab $w={144} $pad={38}><Text w={63} size={25}>Front</Text></ViewTab>
              <ViewTab $w={144} $pad={38}><Text w={63} size={25}>Right</Text></ViewTab>
              <ViewTab $w={200} $pad={38}><Text w={141} size={24}>レイアウト...</Text></ViewTab>
            </ViewTabs>
            <Scene>
              <Model />
              <ViewLabel><Text w={143} size={24} weight={700}>Perspective</Text></ViewLabel>
            </Scene>
          </Viewport>
          <SidePanel rows={layers} title="Perspective" />
        </Body>
        <StatusBar>
          <StatusCell $w={33}><Glyph $w={26} $h={20} viewBox="0 0 26 20"><path d="M8 2h18M8 10h18M8 18h18M0 2h3M0 10h3M0 18h3" stroke="#737373" strokeWidth="2" /></Glyph></StatusCell>
          <StatusCell $w={1446}><Text w={1142} size={21.5}>ファイル「/Users/reiterauchi/Desktop/2nd term/fabacademy/laser/reiponのコピー.3dm」を正常に読み込みました。</Text></StatusCell>
          <StatusCell $w={153}><Text w={120}>ミリメートル</Text></StatusCell>
          <Popup><Text w={80}>作業平面</Text><Stepper c="#8a8a8a" /></Popup>
          <StatusCell $w={164}><Text w={101} size={22}>X: 484.62</Text></StatusCell>
          <StatusCell $w={170}><Text w={98} size={22}>Y: 420.32</Text></StatusCell>
          <Text w={72} size={22}>Z: 0.00</Text>
        </StatusBar>
      </Window>

      <Dock>
        {dock.map((d, i) => d === null
          ? <DockSep key={i} />
          : <DockSlot key={i}><Glyph $w={76} viewBox="0 0 76 76" fontFamily="Inter, sans-serif">{d[0]}</Glyph>{d[1] ? <DockDot /> : null}</DockSlot>)}
      </Dock>
      <Defs />
    </Desktop>
  );
}
